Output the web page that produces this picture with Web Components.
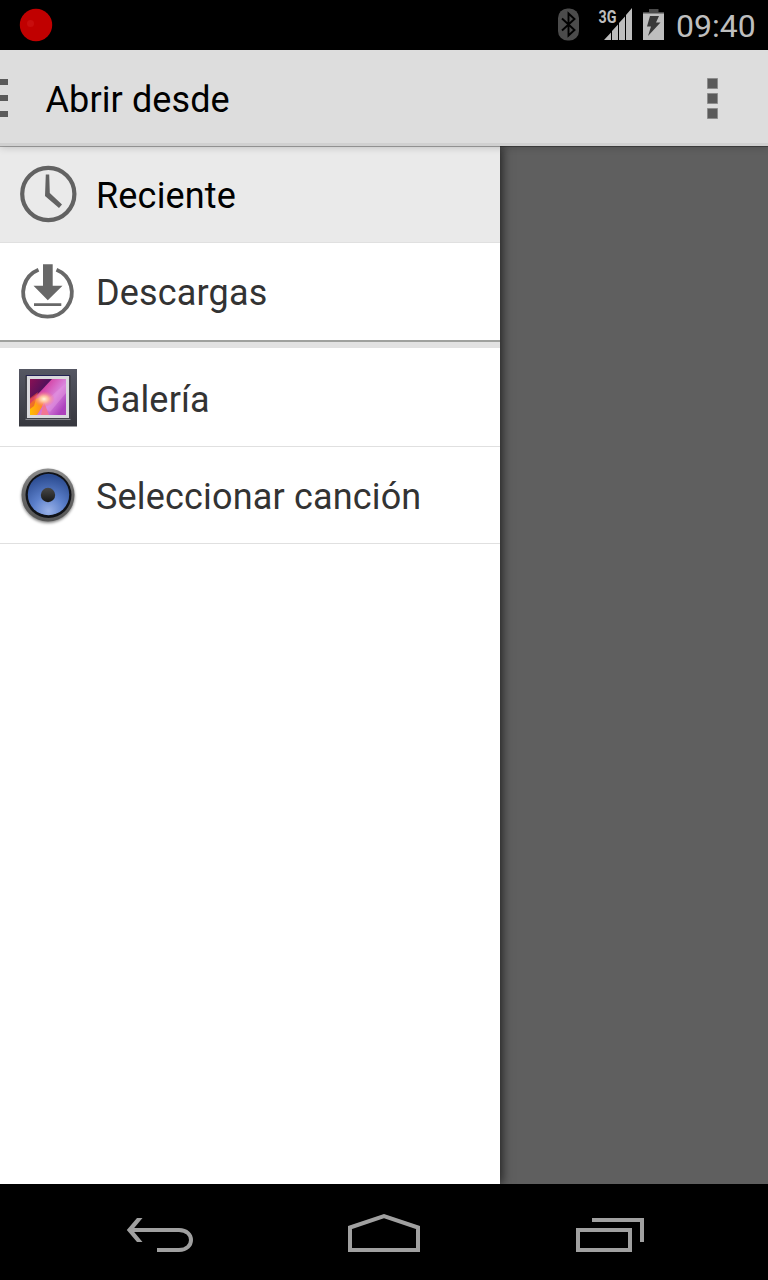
<!DOCTYPE html>
<html lang="es">
<head>
<meta charset="utf-8">
<title>Abrir desde</title>
<style>
html,body{margin:0;padding:0;background:#000}
body{width:768px;height:1280px;overflow:hidden;font-family:Roboto,"Noto Sans",sans-serif}
</style>
</head>
<body>
<document-picker></document-picker>
<script>
function define(name, html) {
  const template = document.createElement('template');
  template.innerHTML = html;
  customElements.define(name, class extends HTMLElement {
    constructor() {
      super();
      this.attachShadow({mode: 'open'}).append(template.content.cloneNode(true));
    }
  });
}

define('status-bar', `
<style>
:host{display:flex;height:50px;background:#000;color:#bebebe;align-items:flex-start}
svg{display:block;flex:none}
.space{flex:1}
.clock{width:92px;font-size:32px;line-height:50px;height:50px;padding-top:1px;box-sizing:border-box;white-space:nowrap}
</style>
<svg width="60" height="50"><circle cx="36" cy="25" r="16.200" fill="#c00000"/><circle cx="30.500" cy="23.500" r="3.500" fill="#c80d0d"/></svg>
<span class="space"></span>
<svg width="126" height="50" viewBox="550 0 126 50">
  <rect x="558" y="8.500" width="21" height="32" rx="9.500" fill="#4b4b4b"/>
  <path d="M562 18.500L574.500 30L568.500 35.500V13.500L574.500 19L562 30.500" fill="none" stroke="#000" stroke-width="1.900"/>
  <text x="598.600" y="23" font-family="Roboto,sans-serif" font-size="18.500" font-weight="700" fill="#bebebe" textLength="18" lengthAdjust="spacingAndGlyphs">3G</text>
  <path d="M604 40L611 32.500V40ZM612 31L618 24.500V40H612ZM619 23L625 16.500V40H619ZM626 15L632 8V40H626Z" fill="#bebebe"/>
  <path d="M643 12H664V40H643Z" fill="#bebebe"/>
  <path d="M643 12H649V9H658.500V12H664V13.500H643Z" fill="#4a4a4a"/>
  <path d="M650 16H659L656 22.500H660.500L648 36L651 26.500H647Z" fill="#383838"/>
</svg>
<span class="clock">09:40</span>`);

define('action-bar', `
<style>
:host{display:flex;height:96px;box-sizing:border-box;background:#ddd;box-shadow:inset 0 -3px #d0d0d0,0 1px #0000004d,0 1px 8px #0003;align-items:center;position:relative;z-index:2;color:#000}
.title{flex:1;font-size:36px;line-height:42px;padding-left:36.500px;padding-top:4px;white-space:nowrap;letter-spacing:.1px}
svg{display:block;flex:none}
</style>
<svg width="9" height="96" fill="#5a5a5a"><path d="M0 29H8V35H0ZM0 45H8V51H0ZM0 61H8V67H0Z"/></svg>
<span class="title"><slot></slot></span>
<svg width="68" height="96" viewBox="700 0 68 96" fill="#5a5a5a" stroke="#8c8c8c"><path d="M707.500 28.500H717.500V38.500H707.500ZM707.500 43.500H717.500V53.500H707.500ZM707.500 58.500H717.500V68.500H707.500Z"/></svg>`);

define('root-item', `
<style>
:host{display:flex;height:97px;box-sizing:border-box;align-items:center;border-bottom:1px solid #e0e0e0;padding-left:16px;gap:16px;color:#333;background:#fff;font-size:36px;line-height:42px;white-space:nowrap}
:host([selected]){background:#eaeaea;color:#000}
:host([last-in-group]){border:0}
:host([first-in-group]){height:99px;padding-top:2px}
.label{padding-top:3px;letter-spacing:.17px}
</style>
<slot name="icon"></slot><span class="label"><slot></slot></span>`);

define('group-divider', `
<style>:host{display:block;height:8px;box-sizing:border-box;background:#e2e2e2;border-top:2px solid #9fa19e}</style>`);

define('clock-icon', `
<style>:host,svg{display:block;width:64px;height:64px}</style>
<svg viewBox="0 0 64 64"><circle cx="32.300" cy="32" r="26.100" fill="none" stroke="#626262" stroke-width="4.200"/><path d="M29.800 12.500H33.200L33.800 31L46 42.500L43 46L29 34Z" fill="#626262"/></svg>`);

define('download-icon', `
<style>:host,svg{display:block;width:64px;height:64px}</style>
<svg viewBox="0 .7 64 64"><path d="M40.500 10.500A24.300 24.300 0 1 1 22.500 10.500" fill="none" stroke="#686868" stroke-width="3.900"/><path d="M27 5H36.700V26.500H46.500L31.800 41L17.500 26.500H27ZM18 44H45.300V46.700H18Z" fill="#686868"/></svg>`);

define('gallery-icon', `
<style>:host,svg{display:block;width:64px;height:64px}</style>
<svg viewBox="0 -1 64 64">
<defs>
<linearGradient id="frame" x2="0" y2="1"><stop stop-color="#555763"/><stop offset="1" stop-color="#36373e"/></linearGradient>
<linearGradient id="photo" x2="1" y2=".7"><stop stop-color="#a00b62"/><stop offset=".4" stop-color="#d549aa"/><stop offset=".7" stop-color="#d983dc"/><stop offset="1" stop-color="#ad42bd"/></linearGradient>
<radialGradient id="glow"><stop stop-color="#fff9e0"/><stop offset=".4" stop-color="#ffc29b" stop-opacity=".9"/><stop offset="1" stop-color="#ff6280" stop-opacity="0"/></radialGradient>
<linearGradient id="dark" x2="1" y2=".6"><stop stop-color="#8a1054"/><stop offset="1" stop-color="#35125e"/></linearGradient>
<linearGradient id="flame" x2="1" y2="0"><stop stop-color="#ffbd00"/><stop offset="1" stop-color="#ff7a31"/></linearGradient>
<clipPath id="crop"><rect x="14" y="12" width="36" height="36"/></clipPath>
</defs>
<rect x="3" y="2" width="58" height="57.500" fill="url(#frame)"/>
<path d="M9 8.500H55V52.500H9Z" fill="#41424a"/>
<path d="M9.500 52.500H54.500" stroke="#85868c"/>
<path d="M10 8.500H54" stroke="#242255"/>
<rect x="11" y="9" width="42" height="42" fill="#d9d9dd"/>
<g clip-path="url(#crop)"><path fill="url(#photo)" d="M14 12H50V48H14Z"/><path fill="url(#dark)" d="M14 12H36L22 27L14 32Z"/><path d="M50 16L25 38L34 45L50 26Z" fill="#e495df" opacity=".5"/><path d="M14 37Q20 29 30 30L26 40L21 48H14Z" fill="url(#flame)"/><path d="M14 31L22 25L18 39L14 42Z" fill="#e74b37" opacity=".65"/><path d="M28 35L33 48H25Z" fill="#f17693"/><ellipse cx="28" cy="32" rx="11" ry="8" fill="url(#glow)"/></g>
</svg>`);

define('speaker-icon', `
<style>:host,svg{display:block;width:64px;height:64px}</style>
<svg viewBox="0 -1 64 64">
<defs>
<linearGradient id="ring" x2="0" y2="1"><stop stop-color="#8d8d8d"/><stop offset=".5" stop-color="#666"/><stop offset="1" stop-color="#555"/></linearGradient>
<radialGradient id="cone" cx=".5" cy=".9" r=".85"><stop stop-color="#9ab2e8"/><stop offset=".45" stop-color="#5b7fca"/><stop offset="1" stop-color="#2c4c91"/></radialGradient>
<linearGradient id="cap" x2="0" y2="1"><stop stop-color="#484848"/><stop offset="1" stop-color="#171717"/></linearGradient>
<filter id="soft" x="-20%" y="-20%" width="140%" height="140%"><feGaussianBlur stdDeviation="1.500"/></filter>
</defs>
<circle cx="32" cy="32.500" r="26.500" opacity=".5" filter="url(#soft)"/>
<circle cx="32" cy="31" r="26.500" fill="url(#ring)"/><circle cx="32.500" cy="31" r="23" fill="#101217"/><circle cx="32.500" cy="30.500" r="20.700" fill="url(#cone)"/><circle cx="32" cy="31" r="7.200" fill="url(#cap)"/>
</svg>`);

define('roots-drawer', `
<style>:host{display:flex;flex-direction:column;width:500px;background:#fff;box-shadow:2px 0 10px #000a;position:relative;z-index:1}</style>
<slot></slot>`);

define('navigation-bar', `
<style>:host{display:grid;grid-template-columns:1fr 1fr 1fr;height:96px;background:#000;padding:0 45px;position:relative;z-index:2}svg{display:block;width:100%;height:96px}</style>
<svg viewBox="45 0 226 96" fill="none" stroke="#a0a0a0" stroke-width="4"><path d="M157 66H179C195 66 195 46 179 46H130"/><path d="M142.500 34H137L126.800 46L137 58H142.500L132.500 46Z" fill="#a0a0a0" stroke="none"/></svg>
<svg viewBox="271 0 226 96" fill="none" stroke="#a0a0a0" stroke-width="4"><path d="M350 66V43.500L384 32L418 43.500V66Z"/></svg>
<svg viewBox="497 0 226 96" fill="none" stroke="#a0a0a0" stroke-width="4"><path d="M578 46H630V66H578ZM592 36H642V58"/></svg>`);

define('document-picker', `
<style>:host{display:flex;flex-direction:column;width:768px;height:1280px}main{display:flex;flex:1;background:#5f5f5f}</style>
<status-bar></status-bar>
<action-bar>Abrir desde</action-bar>
<main><roots-drawer>
<root-item selected><clock-icon slot="icon"></clock-icon>Reciente</root-item>
<root-item last-in-group><download-icon slot="icon"></download-icon>Descargas</root-item>
<group-divider></group-divider>
<root-item first-in-group><gallery-icon slot="icon"></gallery-icon>Galería</root-item>
<root-item><speaker-icon slot="icon"></speaker-icon>Seleccionar canción</root-item>
</roots-drawer></main>
<navigation-bar></navigation-bar>`);
</script>
</body>
</html>
